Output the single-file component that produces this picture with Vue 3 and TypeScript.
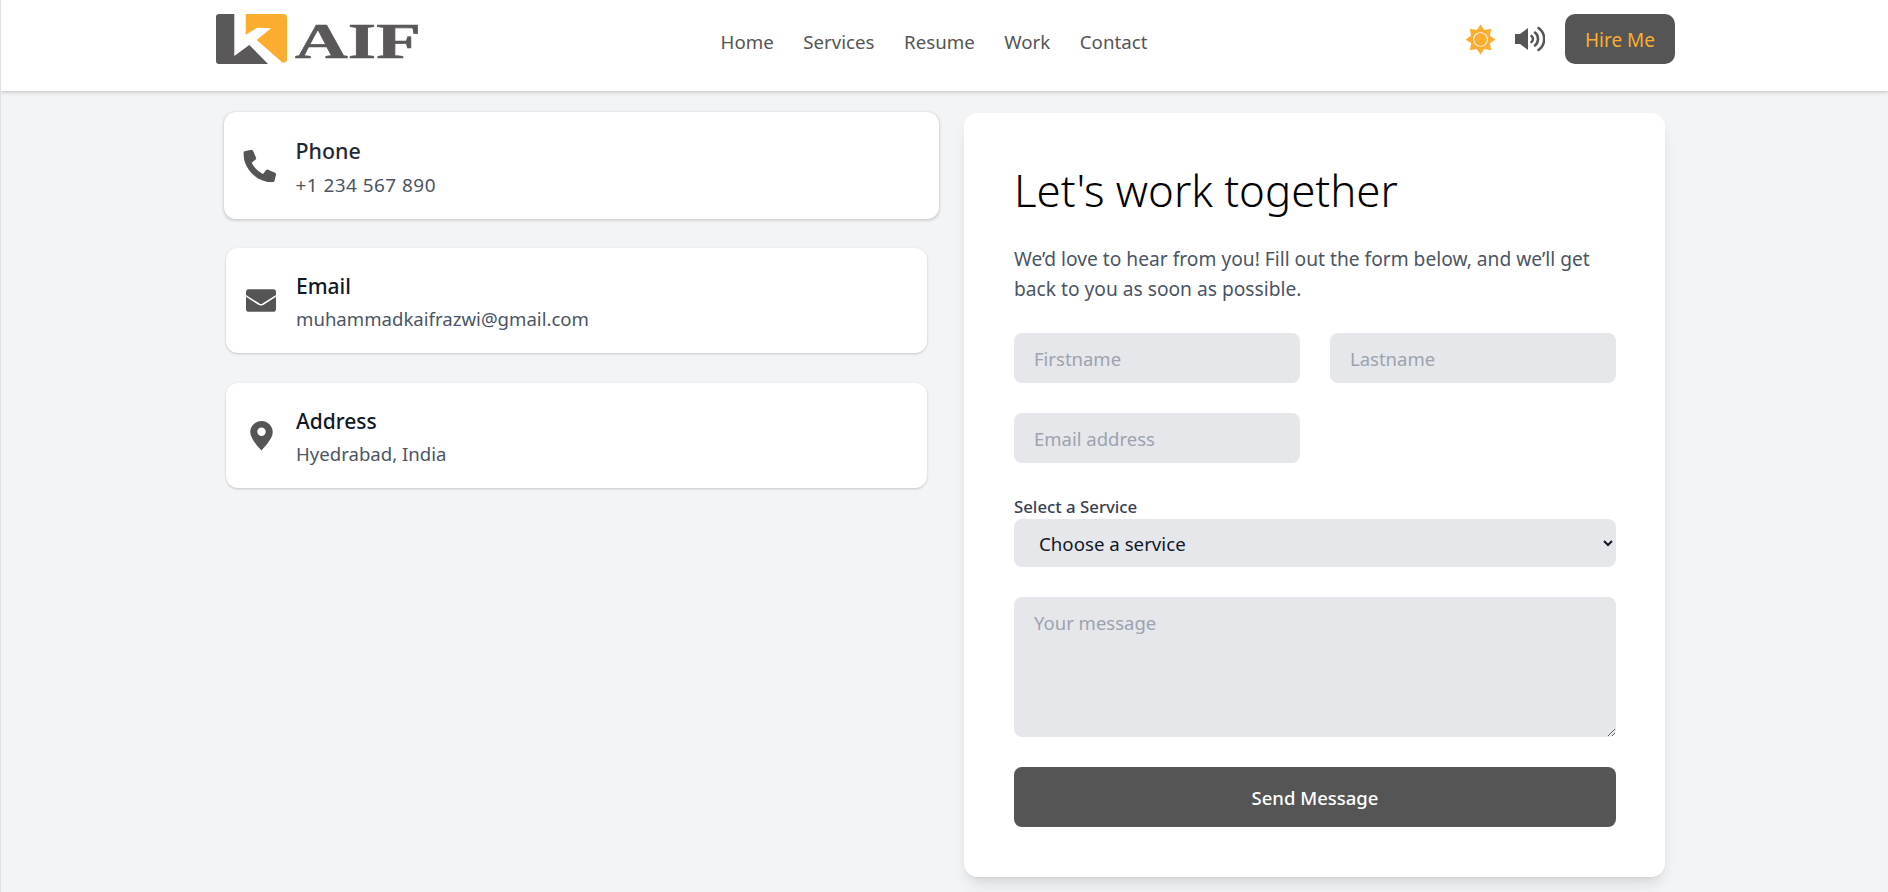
<script setup lang="ts">
import { ref } from 'vue'

const links = ['Home', 'Services', 'Resume', 'Work', 'Contact']
const contacts = [
  { key: 'phone', label: 'Phone', value: '+1 234 567 890' },
  { key: 'email', label: 'Email', value: 'muhammadkaifrazwi@gmail.com' },
  { key: 'pin', label: 'Address', value: 'Hyedrabad, India' },
]
const service = ref('')
</script>

<template>
  <div class="page">
    <header class="topbar">
      <div class="topbar-inner">
        <a class="logo" href="#">
          <svg class="logo-mark" viewBox="0 0 71 50" width="71" height="50">
            <path d="M3 0H18.300V42L33.300 31 52 50H3a3 3 0 0 1-3-3V3a3 3 0 0 1 3-3Z" fill="#5a5859" />
            <path d="M29.700 0H67a4 4 0 0 1 4 4V46a3.500 3.500 0 0 1-5 2.300L40.700 26 55 14.300 41.300 13.700 29.700 20.700Z" fill="#fbad30" />
          </svg>
          <span class="logo-word">AIF</span>
        </a>
        <nav class="nav">
          <a v-for="l in links" :key="l" href="#">{{ l }}</a>
        </nav>
        <div class="actions">
          <svg class="sun" viewBox="-16 -16 32 32" width="31" height="31">
            <path fill="#fbad30" d="M0-15.500 3.800-9.700 11-11 9.700-3.800 15.500 0 9.700 3.800 11 11 3.800 9.700 0 15.500-3.800 9.700-11 11-9.700 3.800-15.500 0-9.700-3.800-11-11-3.800-9.700Z"/>
            <circle r="7.600" fill="#fff"/>
            <circle r="6.600" fill="#fbad30"/>
          </svg>
          <svg class="sound" viewBox="0 0 30 26" width="30" height="26">
            <path fill="#555" d="M0 8H5L13 2V24L5 18H0Z"/>
            <path fill="none" stroke="#555" stroke-width="2.500" stroke-linecap="round" d="M16.500 10a3.800 3.800 0 0 1 0 6M20 6.500a8.500 8.500 0 0 1 0 13M23.500 2a13.500 13.500 0 0 1 0 22"/>
          </svg>
          <button class="hire" type="button">Hire Me</button>
        </div>
      </div>
    </header>

    <main class="content">
      <section class="contacts">
        <article v-for="(c, i) in contacts" :key="c.key" class="contact" :class="{ lifted: i === 0 }">
          <span class="contact-icon">
            <svg v-if="c.key === 'phone'" viewBox="0 0 512 512" width="32" height="32">
              <path fill="#555" d="M0 48 C0 36 8 26 19 24 L123 0 C134 -2 146 4 151 15 L199 127 C203 137 200 148 192 155 L131 204 C167 280 232 345 308 381 L358 320 C365 312 376 309 386 313 L497 361 C508 366 514 378 512 389 L488 493 C486 504 476 512 464 512 C208 512 0 304 0 48 Z"/>
            </svg>
            <svg v-else-if="c.key === 'email'" viewBox="0 0 32 24" width="30" height="23">
              <path fill="#555" d="M3 0H29a3 3 0 0 1 3 3V21a3 3 0 0 1-3 3H3a3 3 0 0 1-3-3V3a3 3 0 0 1 3-3Z"/>
              <path fill="none" stroke="#fff" stroke-width="1.600" d="M-1 6.500 14 16a3.600 3.600 0 0 0 4 0L33 6.500"/>
            </svg>
            <svg v-else viewBox="0 0 24 32" width="23" height="30">
              <path fill="#555" d="M12 0C5.400 0 0 5.300 0 11.800 0 18.500 7.500 26.500 12 31.500 16.500 26.500 24 18.500 24 11.800 24 5.300 18.600 0 12 0Z"/>
              <circle cx="12" cy="11.500" r="4.500" fill="#fff"/>
            </svg>
          </span>
          <div class="contact-text">
            <h3>{{ c.label }}</h3>
            <p>{{ c.value }}</p>
          </div>
        </article>
      </section>

      <form class="form" @submit.prevent>
        <h1>Let's work together</h1>
        <p class="intro">We’d love to hear from you! Fill out the form below, and we’ll get back to you as soon as possible.</p>
        <div class="fields">
          <input placeholder="Firstname" />
          <input placeholder="Lastname" />
          <input placeholder="Email address" />
        </div>
        <label class="select-label" for="svc">Select a Service</label>
        <select id="svc" v-model="service">
          <option value="">Choose a service</option>
        </select>
        <textarea placeholder="Your message"></textarea>
        <button class="send" type="submit">Send Message</button>
      </form>
    </main>
  </div>
</template>

<style>
html, body { margin: 0; background: #f3f4f6; }
</style>

<style scoped>
.page {
  width: 1888px;
  height: 892px;
  box-sizing: border-box;
  overflow: hidden;
  background: #f3f4f6;
  border-left: 1px solid #dfe1e6;
  font-family: "Noto Sans", "Open Sans", sans-serif;
  color: #111827;
}
.topbar {
  height: 91px;
  box-sizing: border-box;
  background: #fff;
  box-shadow: 0 1px 4px rgba(0, 0, 0, 0.22);
  position: relative;
}
.topbar-inner {
  margin-left: 215px;
  width: 1459px;
  display: grid;
  grid-template-columns: 1fr auto 1fr;
  padding-top: 14px;
}
.logo {
  display: flex;
  align-items: flex-start;
  gap: 8px;
  text-decoration: none;
}
.logo-mark { display: block; }
.logo-word {
  font-family: "Liberation Serif", "DejaVu Serif", serif;
  font-weight: 700;
  font-size: 50px;
  line-height: 50px;
  color: #5a5859;
  -webkit-text-stroke: 0.6px #5a5859;
  transform: scaleX(1.46);
  transform-origin: left center;
  margin-top: 2px;
}
.nav {
  display: flex;
  gap: 29.500px;
  padding-top: 15px;
  padding-right: 23px;
}
.nav a {
  font-size: 18.700px;
  line-height: 26px;
  color: #555;
  text-decoration: none;
}
.actions {
  display: flex;
  justify-content: flex-end;
  align-items: center;
  height: 50px;
}
.sun { margin-right: 19px; }
.sound { margin-right: 20px; }
.hire {
  width: 110px;
  height: 50px;
  border: 0;
  border-radius: 10px;
  background: #555;
  color: #fbad30;
  font: inherit;
  font-size: 19px;
  padding-top: 2px;
}
.content {
  margin-left: 225px;
  width: 1439px;
  display: grid;
  grid-template-columns: 701px 701px;
  column-gap: 37px;
  padding-top: 22px;
}
.contacts {
  display: flex;
  flex-direction: column;
  gap: 30px;
}
.contact {
  height: 105px;
  box-sizing: border-box;
  background: #fff;
  border-radius: 12px;
  box-shadow: 0 1px 3px rgba(0, 0, 0, 0.14), 0 1px 2px rgba(0, 0, 0, 0.06);
  display: flex;
  align-items: center;
  padding-left: 19px;
}
.contact.lifted {
  transform: translateX(5px) scale(1.02);
  box-shadow: 0 1px 3px rgba(0, 0, 0, 0.1), 0 1px 2px rgba(0, 0, 0, 0.04);
}
.lifted h3 { color: #1f2937; }
.lifted p { color: #6b7280; letter-spacing: 0.45px; }
.contact-icon {
  width: 32px;
  display: flex;
  justify-content: center;
  margin-right: 19px;
}
.contact-text { padding-top: 2px; }
.contact h3 {
  margin: 0;
  font-size: 21px;
  line-height: 30px;
  font-weight: 500;
}
.contact p {
  margin: 4px 0 0;
  font-size: 18.600px;
  line-height: 28px;
  color: #4b5563;
}
.form {
  background: #fff;
  border-radius: 14px;
  box-shadow: 0 10px 15px -3px rgba(0, 0, 0, 0.1), 0 4px 6px -4px rgba(0, 0, 0, 0.1);
  box-sizing: border-box;
  height: 764px;
  padding: 50px 49px 50px 50px;
  display: flex;
  flex-direction: column;
}
.form h1 {
  margin: 0;
  font-size: 43.800px;
  line-height: 54px;
  font-weight: 300;
  color: #000;
}
.intro {
  margin: 26px 0 0;
  font-size: 19.200px;
  line-height: 30px;
  color: #4b5563;
  position: relative;
  top: 1px;
}
.fields {
  display: grid;
  grid-template-columns: 286px 286px;
  column-gap: 30px;
  row-gap: 30px;
  margin-top: 30px;
}
input, textarea {
  box-sizing: border-box;
  border: 0;
  outline: 0;
  background: #e5e7eb;
  border-radius: 8px;
  padding: 0 20px;
  font: inherit;
  font-size: 18.500px;
  color: #111827;
}
input { height: 50px; }
input::placeholder, textarea::placeholder { color: #9ca3af; opacity: 1; }
.select-label {
  margin-top: 32px;
  font-size: 16.800px;
  line-height: 24px;
  font-weight: 500;
  color: #374151;
  height: 24px;
}
select {
  box-sizing: border-box;
  width: 100%;
  height: 48px;
  border: 0;
  outline: 0;
  border-radius: 8px;
  background: #e5e7eb;
  padding: 0 20px 0 21px;
  font: inherit;
  font-size: 18.700px;
  color: #111827;
}
textarea {
  display: block;
  height: 140px;
  margin-top: 30px;
  padding-top: 12px;
  line-height: 28px;
  width: 100%;
  resize: vertical;
}
.send {
  margin-top: 30px;
  height: 60px;
  border: 0;
  border-radius: 8px;
  background: #555;
  color: #fff;
  font: inherit;
  font-size: 18.500px;
  font-weight: 500;
}
</style>
